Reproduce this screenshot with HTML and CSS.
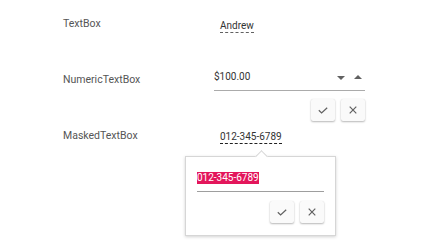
FILE: index.html
```html
<!DOCTYPE html>
<html>
<head>
<meta charset="utf-8">
<link rel="stylesheet" href="styles.css">
</head>
<body>
<div class="form">
  <div class="row row-text">
    <div class="label">TextBox</div>
    <div class="value-wrap"><span class="value dashed-light">Andrew</span></div>
  </div>
  <div class="row row-num">
    <div class="label label-num">NumericTextBox</div>
    <div class="editor">
      <div class="input">
        <span class="input-text">$100.00</span>
        <span class="spin spin-down"></span>
        <span class="spin spin-up"></span>
      </div>
      <div class="actions">
        <button class="btn"><svg width="10" height="7" viewBox="0 0 10 7"><path d="M0.8 3.3 L3.6 6 L9.2 0.8" fill="none" stroke="#616161" stroke-width="1.2"/></svg></button>
        <button class="btn"><svg width="8" height="8" viewBox="0 0 8 8"><path d="M0.7 0.7 L7.3 7.3 M7.3 0.7 L0.7 7.3" fill="none" stroke="#616161" stroke-width="1.2"/></svg></button>
      </div>
    </div>
  </div>
  <div class="row row-mask">
    <div class="label label-mask">MaskedTextBox</div>
    <div class="value-wrap">
      <span class="value dashed-dark">012-345-6789</span>
      <div class="popup">
        <span class="arrow"></span>
        <div class="input popup-input"><span class="selected">012-345-6789</span></div>
        <div class="actions popup-actions">
          <button class="btn"><svg width="10" height="7" viewBox="0 0 10 7"><path d="M0.8 3.3 L3.6 6 L9.2 0.8" fill="none" stroke="#616161" stroke-width="1.2"/></svg></button>
          <button class="btn"><svg width="8" height="8" viewBox="0 0 8 8"><path d="M0.7 0.7 L7.3 7.3 M7.3 0.7 L0.7 7.3" fill="none" stroke="#616161" stroke-width="1.2"/></svg></button>
        </div>
      </div>
    </div>
  </div>
</div>
</body>
</html>
```
FILE: styles.css
```css
html, body {
  margin: 0;
  padding: 0;
  background: #fff;
}
body {
  font-family: Roboto, "Liberation Sans", sans-serif;
  min-height: 244px;
}
.form {
  padding-left: 63px;
}
.row {
  display: flex;
  align-items: flex-start;
}
.label {
  width: 151px;
  flex: none;
  font-size: 10.5px;
  line-height: 12px;
  color: #555;
}
.row-text {
  margin-top: 18px;
}
.value-wrap {
  display: flex;
  flex-direction: column;
  align-items: flex-start;
  padding-top: 2px;
  padding-left: 6px;
}
.value {
  font-size: 10px;
  line-height: 12px;
  color: #333;
}
.dashed-light {
  border-bottom: 1px dashed #616161;
}
.dashed-dark {
  border-bottom: 1px dashed #212121;
}
.row-num {
  margin-top: 38px;
}
.label-num {
  padding-top: 3px;
}
.editor {
  width: 151px;
  display: flex;
  flex-direction: column;
}
.input {
  display: flex;
  align-items: center;
  padding-bottom: 7px;
  border-bottom: 1px solid #ababab;
  font-size: 10px;
  line-height: 12px;
  color: #333;
}
.input-text {
  flex: 1;
}
.spin {
  width: 0;
  height: 0;
  border-left: 4px solid transparent;
  border-right: 4px solid transparent;
}
.spin-down {
  border-top: 4px solid #616161;
  margin-right: 9px;
  margin-top: 1px;
}
.spin-up {
  border-bottom: 4px solid #616161;
  margin-right: 3px;
  margin-top: -1px;
}
.actions {
  display: flex;
  justify-content: flex-end;
  gap: 6px;
  margin-top: 8px;
}
.btn {
  width: 24px;
  height: 22px;
  padding: 0;
  border: none;
  border-radius: 2px;
  background: #fafafa;
  box-shadow: 0 1px 2px rgba(0, 0, 0, 0.28), 0 0 1px rgba(0, 0, 0, 0.1);
  display: flex;
  align-items: center;
  justify-content: center;
}
.row-mask {
  margin-top: 8px;
}
.label-mask {
  padding-top: 1px;
}
.popup {
  position: relative;
  margin-left: -35px;
  margin-top: 12px;
  width: 127px;
  padding: 15px 11px 12px 11px;
  background: #fff;
  border: 1px solid #d6d6d6;
  box-shadow: 0 1px 3px rgba(0, 0, 0, 0.18);
}
.arrow {
  position: absolute;
  left: 71px;
  top: -5px;
  width: 8px;
  height: 8px;
  background: #fff;
  border-top: 1px solid #d6d6d6;
  border-left: 1px solid #d6d6d6;
  transform: rotate(45deg);
}
.popup-input {
  border-bottom-color: #9e9e9e;
}
.selected {
  background: #e3165b;
  color: #fff;
}
.popup-actions {
  margin-top: 9px;
}
```
